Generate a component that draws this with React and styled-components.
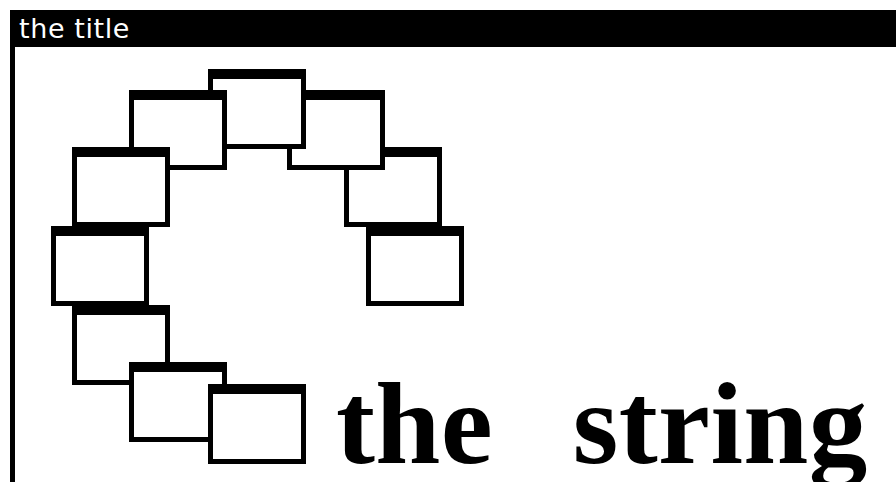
import React from "react";
import styled, { createGlobalStyle } from "styled-components";

const GlobalStyle = createGlobalStyle`
  html, body {
    margin: 0;
    padding: 0;
    background: #ffffff;
    overflow: hidden;
  }
  body {
    padding: 10px 0 0 10px;
  }
`;

const Window = styled.div`
  width: 1000px;
  height: 600px;
  display: flex;
  flex-direction: column;
  background: #ffffff;
`;

const TitleBar = styled.div`
  height: 37px;
  background: #000000;
  color: #ffffff;
  font-family: "DejaVu Sans", "Liberation Sans", sans-serif;
  font-size: 27px;
  line-height: 37px;
  letter-spacing: 0.6px;
  padding-left: 9px;
  box-sizing: border-box;
  white-space: nowrap;
`;

const Canvas = styled.div`
  position: relative;
  flex: 1;
  border-left: 5px solid #000000;
  background: #ffffff;
`;

const MiniWindow = styled.div`
  position: absolute;
  box-sizing: border-box;
  width: 98px;
  height: 80px;
  background: #ffffff;
  border: 5px solid #000000;
  border-top-width: 10px;
`;

const Label = styled.div`
  position: absolute;
  left: 321px;
  top: 318px;
  font-family: "Liberation Serif", "Times New Roman", serif;
  font-weight: 700;
  font-size: 117px;
  line-height: 1;
  letter-spacing: 0.4px;
  word-spacing: 50px;
  color: #000000;
  white-space: nowrap;
`;

const ANGLES = [0, -30, -60, -90, -120, -150, 180, 150, 120, 90];
const RADIUS = 157.5;
const CX = 193;
const CY = 179;

export default function App() {
  return (
    <>
      <GlobalStyle />
      <Window>
        <TitleBar>the title</TitleBar>
        <Canvas>
          {ANGLES.map((a) => {
            const rad = (a * Math.PI) / 180;
            const left = Math.round(CX + RADIUS * Math.cos(rad));
            const top = Math.round(CY + RADIUS * Math.sin(rad));
            return <MiniWindow key={a} style={{ left, top }} />;
          })}
          <Label>the string</Label>
        </Canvas>
      </Window>
    </>
  );
}
